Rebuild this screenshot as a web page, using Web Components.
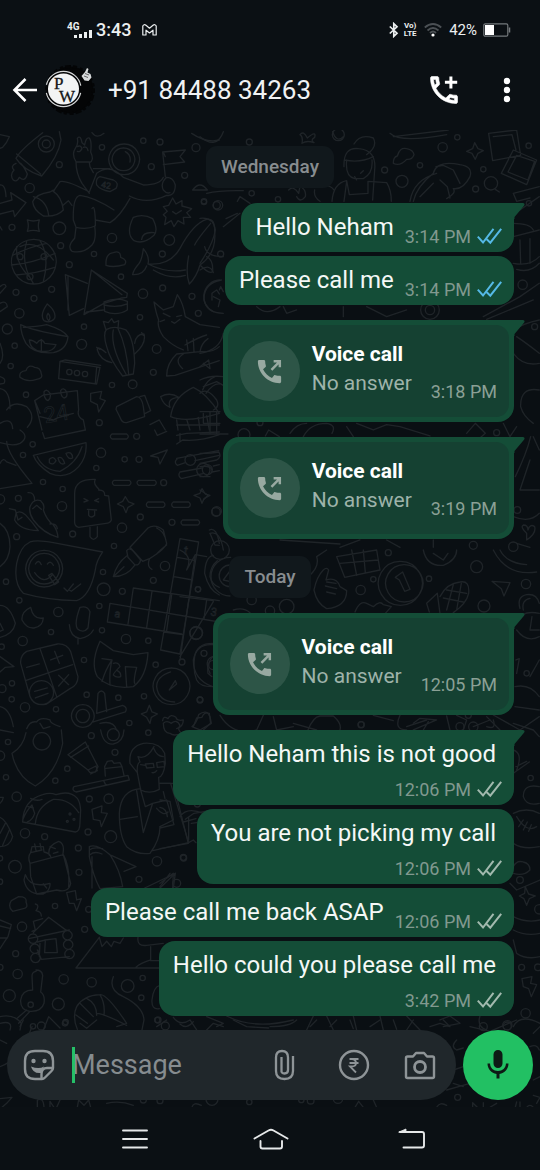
<!DOCTYPE html>
<html lang="en">
<head>
<meta charset="utf-8">
<meta name="viewport" content="width=device-width, initial-scale=1">
<title>Chat</title>
<style>
  html, body { margin: 0; min-height: 100%; background: #0b1014; }
  body { font-family: Roboto, "Liberation Sans", sans-serif; color: #fff; }
</style>
</head>
<body>
<chat-screen>
  <status-bar slot="top"></status-bar>
  <chat-header slot="top">+91 84488 34263</chat-header>
  <date-chip>Wednesday</date-chip>
  <message-bubble tail read time="3:14 PM">Hello Neham</message-bubble>
  <message-bubble read time="3:14 PM">Please call me</message-bubble>
  <call-bubble time="3:18 PM">No answer</call-bubble>
  <call-bubble time="3:19 PM">No answer</call-bubble>
  <date-chip>Today</date-chip>
  <call-bubble time="12:05 PM">No answer</call-bubble>
  <message-bubble tail stacked time="12:06 PM">Hello Neham this is not good</message-bubble>
  <message-bubble stacked time="12:06 PM">You are not picking my call</message-bubble>
  <message-bubble time="12:06 PM">Please call me back ASAP</message-bubble>
  <message-bubble stacked time="3:42 PM">Hello could you please call me</message-bubble>
  <chat-composer slot="composer"></chat-composer>
  <system-nav slot="bottom"></system-nav>
</chat-screen>

<script>
const define = (name, html, after) => customElements.define(name, class extends HTMLElement {
  constructor() {
    super();
    this.attachShadow({ mode: 'open' }).innerHTML = html;
  }
  connectedCallback() { if (after) after(this, this.shadowRoot); }
});

const TAIL = '<svg class="tail" width="12" height="16" viewBox="0 0 12 16" aria-hidden="true"><path d="M0 0H10Q12.500 .3 11 2.800L1.500 14V16H0Z" fill="#144d37"/></svg>';

/* ---------- page frame ---------- */
define('chat-screen', `
<style>
  :host { display: flex; flex-direction: column; min-height: 100vh; background: #0b1014; }
  main { position: relative; flex: 1; display: flex; flex-direction: column; padding: 16px 7px 7px; overflow: hidden; }
  chat-wallpaper { position: absolute; inset: 0; }
  .log { position: relative; display: flex; flex-direction: column; align-items: flex-end; padding: 0 19px 14px; }
  .composer { position: relative; margin-top: auto; }
</style>
<slot name="top"></slot>
<main>
  <chat-wallpaper></chat-wallpaper>
  <div class="log"><slot></slot></div>
  <div class="composer"><slot name="composer"></slot></div>
</main>
<slot name="bottom"></slot>`);

/* ---------- status bar ---------- */
define('status-bar', `
<style>
  :host { display: flex; align-items: center; justify-content: space-between; height: 60px; padding: 0 29px 0 67px; color: #eceff0; }
  div { display: flex; align-items: center; }
  svg { display: block; }
  .net { display: grid; width: 24px; margin-right: 5px; font: 700 10px/7px Roboto, sans-serif; }
  .net svg { margin-left: 7px; }
  time { font: 500 18px/22px Roboto, sans-serif; margin-right: 11px; }
  .volte { font: 700 8px/8px Roboto, sans-serif; text-align: center; width: 14px; margin: 0 7px 0 4px; }
  .pct { font-size: 15px; line-height: 20px; margin: 0 6px 0 7px; }
</style>
<div>
  <span class="net">4G<svg width="18" height="8" viewBox="0 0 18 8" fill="#eceff0"><path d="M0 5h3v3H0zM5 4h3v4H5zM10 2h3v6h-3zM15 0h3v8h-3z"/></svg></span>
  <time>3:43</time>
  <svg width="15" height="12" viewBox="0 0 15 12" fill="none" stroke="#eceff0" stroke-width="1.200" stroke-linejoin="round"><path d="M.8 2v9h3.200V6.200l3.500 2.800L11 6.200V11h3.200V2Q13-.2 11 1.300L7.500 4.200 4 1.300Q2-.2.8 2Z"/></svg>
</div>
<div>
  <svg width="10" height="16" viewBox="0 0 10 16" fill="none" stroke="#eceff0" stroke-width="1.700"><path d="M.8 4.500 8 11.200 4.800 14.300V1.700L8 4.800.8 11.500"/></svg>
  <span class="volte">Vo)<br>LTE</span>
  <svg width="18" height="14" viewBox="0 0 18 14" fill="none" stroke="#4b5054" stroke-width="1.800"><path d="M.8 4.500Q9-2.500 17.200 4.500M3.500 7.500Q9 2.500 14.500 7.500M6 10Q9 7 12 10"/><circle cx="9" cy="12" r="1.600" fill="#fff" stroke="none"/></svg>
  <span class="pct">42%</span>
  <svg width="28" height="14" viewBox="0 0 28 14"><rect x=".8" y=".8" width="24" height="12.400" rx="1.500" fill="none" stroke="#74797c" stroke-width="1.200"/><path d="M26.500 4.500v5" stroke="#74797c" stroke-width="1.500"/><rect x="2" y="2" width="9" height="10" fill="#fff"/></svg>
</div>`);

/* ---------- header ---------- */
define('chat-header', `
<style>
  :host { display: flex; align-items: center; height: 60px; padding: 0 18px 10px 11px; }
  button { padding: 0; border: 0; background: none; display: block; }
  svg { display: block; }
  .avatar { margin: 0 12px 0 5px; }
  h1 { flex: 1; margin: 0; font: 400 26px/32px Roboto, sans-serif; color: #f0f2f3; }
  .more { margin-left: 30px; }
</style>
<button aria-label="Back"><svg width="28" height="28" viewBox="0 0 28 28" fill="none" stroke="#fff" stroke-width="2.600"><path d="M26 14H4M14.500 3 3.500 14l11 11"/></svg></button>
<svg class="avatar" width="52" height="52" viewBox="0 0 52 52" aria-hidden="true">
  <circle cx="26" cy="26" r="23.500" fill="#040506" stroke="#040506" stroke-width="3" stroke-dasharray="3 2 6 2 4 3"/>
  <circle cx="19.500" cy="25" r="15.500" fill="#f3f4f4"/>
  <circle cx="19.500" cy="25" r="17.600" fill="none" stroke="#d5d7d8" stroke-width="1.200" stroke-dasharray="47 8.300" stroke-dashoffset="-4"/>
  <text x="10" y="25" font-family="Liberation Serif, serif" font-size="17" fill="#161819" stroke="#161819" stroke-width=".3">P<tspan x="15" y="38">W</tspan></text>
  <path d="m41 8 2-4 1.500 1-1 3.500 3 1.500 1 3.500-3 3.500-4-.5-3-4.500Z" fill="#d8dadb"/>
  <path d="M41 9.500 45 11M40 12l4 1.500" stroke="#444" stroke-width=".8"/>
</svg>
<h1><slot></slot></h1>
<button aria-label="Add call"><svg width="36" height="36" viewBox="0 0 24 24" fill="#fff"><path stroke="#fff" stroke-width=".4" d="M6.540 5c.06.890.210 1.760.450 2.590l-1.200 1.200c-.410-1.200-.670-2.470-.760-3.790h1.510m9.860 12.020c.850.240 1.720.390 2.600.450v1.490c-1.320-.090-2.590-.350-3.800-.750l1.200-1.190M7.500 3H4c-.550 0-1 .450-1 1 0 9.390 7.610 17 17 17 .550 0 1-.450 1-1v-3.490c0-.550-.450-1-1-1-1.240 0-2.450-.200-3.570-.570-.100-.040-.210-.050-.310-.050-.260 0-.510.100-.710.290l-2.200 2.200c-2.830-1.450-5.150-3.760-6.590-6.590l2.200-2.200c.280-.280.360-.670.250-1.020C8.700 6.450 8.500 5.250 8.500 4c0-.550-.450-1-1-1z"/><path d="M15.600 3h2v2.900h3.200v2h-3.200v3.100h-2V7.900h-3V5.900h3z"/></svg></button>
<button class="more" aria-label="More options"><svg width="30" height="36" viewBox="0 0 30 36" fill="#fff"><circle cx="15" cy="9" r="3.200"/><circle cx="15" cy="18" r="3.200"/><circle cx="15" cy="27" r="3.200"/></svg></button>`);

/* ---------- date separator ---------- */
define('date-chip', `
<style>
  :host { display: block; align-self: center; margin-bottom: 15px; padding: 0 15px; border-radius: 11px; background: #11181c; color: #888d90; font: 500 19px/42px Roboto, sans-serif; position: relative; }
  :host(:not(:first-of-type)) { margin-top: 2px; }
</style>
<slot></slot>`);

/* ---------- text message ---------- */
define('message-bubble', `
<style>
  :host { position: relative; display: flex; align-items: flex-end; gap: 11px; margin-bottom: 4px; padding: 10px 12px 5px 14px; border-radius: 16px; background: #144d37; }
  :host([tail]) { border-top-right-radius: 0; }
  :host([stacked]) { flex-direction: column; gap: 0; }
  :host(:last-of-type) { margin-bottom: 0; }
  p { margin: 0 0 6px; font-size: 24px; line-height: 28px; color: #f4f8f6; white-space: nowrap; }
  :host([stacked]) p { margin: 0 6px 12px 0; }
  .meta { display: flex; align-items: center; gap: 6px; font-size: 18px; line-height: 20px; color: #81998f; white-space: nowrap; }
  .tick { display: block; fill: none; stroke: #a2b9ae; stroke-width: 2; }
  :host([read]) .tick { stroke: #55b9e6; }
  .tail { position: absolute; top: 0; right: -11px; display: none; }
  :host([tail]) .tail { display: block; }
</style>
<p><slot></slot></p>
<span class="meta"><time></time><svg class="tick" width="25" height="18" viewBox="0 0 25 18" aria-hidden="true"><path d="M.8 8.700 6 14.500 16.500 .8M9.800 11.300 13.300 14.700 24.200 .8"/></svg></span>
${TAIL}`, (el, root) => { root.querySelector('time').textContent = el.getAttribute('time'); });

/* ---------- voice call entry ---------- */
define('call-bubble', `
<style>
  :host { position: relative; display: block; margin: 11px 0 15px; padding: 5px; border-radius: 16px 0 16px 16px; background: #144d37; }
  .panel { display: flex; align-items: center; padding: 15px 12px; border-radius: 13px; background: #154132; }
  .disc { width: 60px; height: 60px; border-radius: 50%; background: #2d5547; display: grid; place-items: center; margin-right: 12px; }
  .text { padding-bottom: 4px; font-size: 21px; line-height: 29px; color: #9eb3aa; white-space: nowrap; }
  strong { display: block; font-weight: 700; color: #fff; }
  time { align-self: flex-end; margin-left: 19px; font-size: 18px; line-height: 20px; color: #8ba096; white-space: nowrap; }
  .tail { position: absolute; top: 0; right: -11px; }
  svg { display: block; }
</style>
<div class="panel">
  <span class="disc"><svg width="31" height="31" viewBox="0 0 24 24" fill="#98a9a1" aria-hidden="true"><path d="M20.010 15.380c-1.230 0-2.420-.200-3.530-.560-.350-.120-.740-.030-1.010.240l-1.570 1.970c-2.830-1.350-5.480-3.900-6.890-6.830l1.950-1.660c.270-.280.350-.670.240-1.020-.370-1.110-.560-2.300-.560-3.530 0-.540-.450-.990-.990-.990H4.190C3.650 3 3 3.240 3 3.990 3 13.280 10.730 21 20.010 21c.710 0 .990-.630.990-1.180v-3.450c0-.540-.450-.990-.990-.990z"/><path d="M13.500 10.700 19.800 4.400M15.200 4H20v4.800" fill="none" stroke="#98a9a1" stroke-width="1.900"/></svg></span>
  <span class="text"><strong>Voice call</strong><slot></slot></span>
  <time></time>
</div>
${TAIL}`, (el, root) => {
  root.querySelector('time').textContent = el.getAttribute('time');
  const prev = el.previousElementSibling;
  if (prev && prev.localName !== 'message-bubble') el.style.marginTop = '0';
});

/* ---------- composer ---------- */
define('chat-composer', `
<style>
  :host { display: flex; gap: 7px; }
  form { flex: 1; min-width: 0; display: flex; align-items: center; gap: 34px; height: 70px; box-sizing: border-box; padding: 0 20px 0 16px; border-radius: 35px; background: #20272b; }
  button { flex: none; padding: 0; border: 0; background: none; display: block; }
  svg { display: block; }
  .field { position: relative; flex: 1; min-width: 0; margin-left: -17px; }
  .field::before { content: ""; position: absolute; left: 0; top: 0; bottom: 0; width: 3px; background: #25c068; }
  input { display: block; width: 100%; height: 36px; box-sizing: border-box; padding: 0; border: 0; outline: 0; background: none; color: #e9edef; font: 400 27px/36px Roboto, sans-serif; }
  input::placeholder { color: #868c8f; opacity: 1; }
  .mic { width: 70px; height: 70px; border-radius: 50%; background: #22c063; display: grid; place-items: center; }
</style>
<form>
  <button type="button" aria-label="Stickers"><svg width="32" height="32" viewBox="0 0 32 32" fill="none" stroke="#8e9497" stroke-width="2.400"><path d="M19 30H12Q2 30 2 20V12Q2 2 12 2H20Q30 2 30 12V19Q30 20.500 28.500 22L22 28.500Q20.500 30 19 30Z"/><path d="M18.500 30V25Q18.500 19 24 19H30" /><path d="M8 17.500Q16 20.500 21 17.500L18 24Q10 25 8 17.500Z" fill="#8e9497" stroke="none"/><circle cx="10.500" cy="12" r="2.200" fill="#8e9497" stroke="none"/><circle cx="21.500" cy="12" r="2.200" fill="#8e9497" stroke="none"/></svg></button>
  <label class="field"><input type="text" placeholder="Message" aria-label="Message"></label>
  <button type="button" aria-label="Attach"><svg width="32" height="32" viewBox="0 0 32 32" fill="none" stroke="#8e9497" stroke-width="2.300"><path d="M21 7V22Q21 30 12.500 30T4 22V8.500Q4 2 10 2T16 8.500V21Q16 24.500 12.500 24.500T9.500 21V8"/></svg></button>
  <button type="button" aria-label="Pay"><svg width="32" height="32" viewBox="0 0 32 32" fill="none" stroke="#8e9497" stroke-width="2.400"><circle cx="16" cy="16" r="14"/><path d="M11.500 10H20.500M11.500 14H20.500M11.500 10H14Q18 10.500 18 14T13.500 17.500H12L18 23.500" stroke-width="1.800"/></svg></button>
  <button type="button" aria-label="Camera"><svg width="32" height="32" viewBox="0 0 32 32" fill="none" stroke="#8e9497" stroke-width="2.400" stroke-linejoin="round"><path d="M3.500 7.500H9L12 4H20L23 7.500H28.500Q30 7.500 30 9V27.500Q30 29 28.500 29H3.500Q2 29 2 27.500V9Q2 7.500 3.500 7.500Z"/><circle cx="16" cy="18" r="5.500" stroke-width="2.800"/></svg></button>
</form>
<button class="mic" aria-label="Record voice message"><svg width="36" height="36" viewBox="0 0 24 24" fill="#0d1a15"><path d="M12 14c1.660 0 3-1.340 3-3V5c0-1.660-1.340-3-3-3S9 3.340 9 5v6c0 1.660 1.340 3 3 3zM17.300 11c0 2.900-2.400 5-5.300 5s-5.300-2.100-5.300-5H5c0 3.530 2.610 6.430 6 6.920V21h2v-3.080c3.390-.490 6-3.390 6-6.920z"/></svg></button>`);

/* ---------- system navigation ---------- */
define('system-nav', `
<style>
  :host { display: flex; align-items: center; justify-content: space-between; height: 63px; padding: 0 113px 0 120px; }
  button { padding: 0; border: 0; background: none; display: block; }
  svg { display: block; fill: none; stroke: #e6e8e9; stroke-width: 1.900; stroke-linecap: round; stroke-linejoin: round; }
</style>
<button aria-label="Recent apps"><svg width="31" height="24" viewBox="0 0 31 24"><path d="M3 3.500H27M3 12H27M3 20.500H27"/></svg></button>
<button aria-label="Home"><svg width="42" height="24" viewBox="0 0 42 24"><path d="M1.500 11.500 15.500 3.500Q18 2 20.500 3.500L34.500 11.500M7.500 14V19.500Q7.500 21.500 9.500 21.500H27Q29 21.500 29 19.500V14"/></svg></button>
<button aria-label="Back"><svg width="31" height="24" viewBox="0 0 31 24"><path d="M4 5H26Q28 5 28 7V18.500Q28 20.500 26 20.500H7.500"/><path d="M3 5 10 2V5Z" fill="#e6e8e9" stroke-width=".8"/></svg></button>`);

/* ---------- doodle wallpaper ---------- */
/* Each tile is drawn at three times its size: x, y, outlines, small circles, lettering. */
const TILES = [
  [0, 0, `
    M128 8Q60 60 48 85Q70 120 125 138Q175 80 183 30L178 5M50 72 122 132M48 100Q30 108 42 120Q28 135 40 150Q50 158 58 142Q75 158 82 132Q72 110 62 100
    M0 55 8 52Q20 40 28 20L0 14M0 220 36 210 32 188 78 218 44 260 40 242 0 252M0 165Q16 162 18 200
    M268 186Q200 150 180 155L160 184M268 190 246 160Q228 130 228 95Q214 72 226 55Q236 42 232 25Q242 14 246 38L254 45Q258 20 268 24Q276 34 272 66Q284 92 268 98L270 110L280 128M228 96H268M232 50Q242 44 246 56Q240 68 232 64M250 52Q262 48 264 62
    M280 116H330M268 186 290 130Q330 100 370 142L430 165Q480 165 490 142M388 198Q440 225 500 196Q525 200 526 165Q520 142 500 142Q480 160 490 180Q500 192 510 188M390 205Q360 260 330 278L286 270Q284 220 276 236M342 240Q280 200 240 196Q218 200 220 270L228 292Q260 300 286 288V268M228 292 224 325Q200 350 216 364Q250 372 276 345Q290 330 284 288
    M160 184Q185 200 190 240Q170 262 130 258Q100 240 98 215Q108 192 150 186Q170 175 160 184M100 200Q140 210 146 256M190 225 205 212 216 226
    M300 140 340 150Q358 158 348 175L330 185Q300 180 290 165Q286 145 300 140Z
    M372 42A46 46 0 1 0 373 42M370 54A34 34 0 1 0 371 54M376 65Q394 75 390 96
    M496 140 488 66 556 60 540 80 554 96 490 104M490 66 496 80
    M518 204 528 222 546 212 546 228 575 236 560 248 572 262 550 262 552 282 534 272 522 290 514 272 494 284 498 262 490 254 502 244 490 230 506 226ZM518 245 528 252 544 242
    M82 270Q100 276 118 270Q112 288 118 304Q100 298 82 304Q88 288 82 270Z
    M400 262Q430 250 458 266Q476 300 462 316Q430 345 402 332Q376 310 400 262ZM425 328Q428 305 462 308
    M101 328A67 67 0 1 0 102 328M60 350Q110 325 160 390M40 375Q90 350 140 340M34 405Q100 400 165 370M48 435Q110 430 164 412M80 335Q60 400 100 460M120 332Q150 380 130 455M50 350Q46 400 88 440
    M318 395Q320 370 340 368Q362 360 362 382Q384 390 374 404Q340 414 318 406Z
    M430 356Q450 380 444 402Q510 408 540 355Q580 280 620 268Q645 262 644 305Q650 370 600 405Q590 440 568 462Q556 430 566 378M430 356Q426 390 416 402Q400 420 398 434Q430 436 440 408M444 402Q500 430 556 420M460 420Q510 450 556 436M600 405Q630 435 638 424Q640 390 620 380M632 280Q590 330 584 345
    M196 434 208 556 250 536M196 434 262 460M274 420 382 490 380 502 366 504 312 520 252 554ZM274 420 366 494M204 440V540M252 554 260 546 310 540M312 516Q350 500 382 514V540Q350 560 314 544ZM312 525Q350 535 382 522
    M142 522Q170 545 164 565Q150 582 132 572Q118 555 142 522ZM144 550Q155 562 146 572Q136 562 144 550ZM62 584Q90 600 204 620Q200 660 160 668Q100 672 78 640Q62 610 62 584ZM70 592Q110 590 140 584Q190 600 202 618M88 630Q100 630 110 640Q124 620 134 640L168 644Q160 668 124 664Q90 660 88 630ZM124 628V662
    M320 598Q345 585 378 600Q402 625 404 700L400 732 368 738Q330 690 320 650Q308 610 320 598ZM340 600Q330 650 378 732M355 598Q380 650 386 732M318 600 310 574 325 578 335 566 342 578 356 572 354 596M404 640Q408 612 432 612Q440 640 404 672M318 668Q290 645 292 660Q300 690 335 698M290 652 300 658M425 608 430 616
    M462 516 490 540 520 530 532 494Q550 520 556 560M462 516Q468 550 476 570Q470 590 490 620Q520 650 550 660M556 560 600 584 658 592M490 550 510 560M530 560 545 556M515 575 524 580 540 568M480 575 494 570M500 738 525 736 658 692M500 738Q500 700 530 672L600 665Q640 668 658 650M550 672Q520 690 548 716M560 630 564 662M580 625 582 664M624 626Q604 640 600 665M555 645Q600 620 620 615
    M180 694 300 712 290 762 176 746ZM180 694 196 690 302 706M290 712 286 760
    M60 742Q56 724 78 722Q84 702 104 712Q122 712 124 732Q130 745 110 748Q80 758 60 742Z
    M104 812 130 795 232 782 236 840Q230 860 250 870L256 900M104 812 126 900M104 812Q112 830 120 850M132 786Q140 774 150 790Q154 806 144 812Q132 808 132 786ZM182 782Q190 770 200 786Q204 802 192 804Q182 798 182 782ZM120 860 160 870Q170 862 220 850
    M272 790 305 784 300 806 316 812 296 846 292 824 272 814Z
    M350 830 410 800Q425 800 430 830L434 860 380 878Q366 880 360 862L348 838ZM420 800 434 796 452 842 436 850
    M482 800Q510 785 536 802Q500 805 510 832Q490 825 482 800ZM512 860Q520 800 580 772Q620 790 658 850M512 860Q560 880 658 850M530 870 534 900M560 868 570 900M595 862 600 900M620 858 628 900M608 780Q620 750 645 740M618 790Q640 760 658 762M450 884 478 870 496 900M530 885H658
    M578 180Q600 150 622 180ZM575 10Q620 40 658 30M658 450A50 50 0 0 0 640 545M636 490 650 480 658 492M636 490V510
    M0 290 6 300M0 640Q16 680 0 700M0 740Q20 745 12 760L0 762M0 776Q30 780 30 836M20 840Q40 810 80 830Q110 860 82 892M0 880Q36 860 38 896M0 470Q16 456 18 470L0 490M0 520Q20 510 22 530L0 545M276 8Q290 28 312 10`,
    [[139,42,24],[139,42,12],[306,52,8],[178,104,9],[89,174,14],[430,32,8],[480,36,9],[454,110,9],[588,53,12],[554,136,9],[612,216,8],[650,226,11],[36,292,9],[178,295,19],[336,324,14],[182,347,9],[508,330,16],[282,372,8],[208,404,9],[487,372,9],[363,440,8],[155,478,9],[48,487,9],[102,505,9],[58,550,14],[429,491,14],[488,474,9],[576,499,9],[595,550,9],[252,590,8],[420,562,8],[22,597,15],[44,647,8],[245,643,15],[470,657,13],[32,708,8],[460,727,9],[398,763,13],[336,765,8],[78,794,8],[298,878,9],[208,726,8],[231,729,8],[255,732,8],[60,380,9],[132,380,9],[90,440,9]],
    [[302,172,26,'42',10],[136,880,66,'24',-10]]],
  [0, 300, `
    M0 38Q40 50 60 40Q90 20 60 0M128 8 134 26 256 0M20 34Q20 70 96 160L0 176M0 100Q10 80 20 96L48 106M100 76 258 38Q262 80 236 110Q200 150 150 130Q110 105 100 76ZM112 80Q130 120 180 124Q230 100 246 50M148 88Q160 76 168 92Q160 108 148 98ZM174 84Q186 76 194 100Q180 108 174 84ZM198 70Q216 62 218 84Q204 90 198 70Z
    M336 12H380Q390 20 380 27H336Q326 20 336 12ZM342 151H388Q398 158 388 166H342Q332 158 342 151ZM416 151H464Q474 158 464 166H416Q406 158 416 151ZM444 216H490Q500 224 490 232H444Q434 224 444 216ZM520 216H566Q576 224 566 232H520Q510 224 520 216ZM548 270H594Q604 277 594 285H548Q538 277 548 270Z
    M464 0 472 16 500 4M452 78 502 60 480 102 474 82ZM530 16 560 10 658 6M530 42 548 30Q600 35 658 14M540 10V34
    M530 85 656 62M532 106 556 98M585 92 658 76M540 126 606 114M544 146 612 130M636 126 658 122M640 108 658 104M532 86Q520 96 532 106M540 126Q532 138 544 146
    M224 190Q224 146 286 148Q280 160 290 170Q300 180 296 180Q315 180 314 196L326 198 334 270Q330 280 318 280L236 292Q222 290 224 270ZM270 292V320Q280 336 292 320V290M252 206 264 212 252 216M296 206 284 212 296 216M262 238 290 240M266 240V256Q274 266 284 256V240
    M376 200 386 216 402 222 384 232 378 248 370 230 352 222 368 214ZM606 176 616 192 630 196 612 206 606 220 600 204 582 196 600 190Z
    M90 230Q100 205 122 212Q136 225 130 240Q140 270 160 285Q172 300 174 322Q130 310 100 270Q86 250 90 230ZM104 212Q104 186 84 188M98 236 110 226 124 238M48 250Q60 240 76 254Q100 280 115 302Q60 300 44 270ZM28 236 46 240 54 270 66 262M150 282Q170 280 172 296
    M90 336Q110 328 160 338L308 366Q288 395 286 420Q270 500 230 512Q140 510 70 490Q40 460 50 400Q60 350 90 336ZM132 361A55 55 0 1 0 133 361M132 370A46 46 0 1 0 133 370M106 402Q116 386 124 404M142 402Q152 390 160 406M104 428Q130 465 156 436M146 436 156 430 176 456 164 464ZM192 474 202 484 220 462M208 480 214 484 242 462
    M390 352 444 294Q465 280 490 300L500 340Q496 356 450 385L428 394ZM380 362Q390 350 402 366L422 390Q418 408 404 404L384 382ZM380 378Q350 400 340 440Q380 440 404 406M342 438 372 410M448 388Q440 410 456 418M500 345Q480 360 470 372M470 294Q490 305 494 320
    M540 326 596 336 540 672 482 660ZM532 382 586 392M522 440 578 450M400 474 658 512M400 474 384 582M330 520 658 576M330 520 322 576 545 612M456 484 440 592M515 494 500 602M568 502 558 562M620 510 612 566M492 606 548 614
    M92 532Q64 545 66 570Q80 596 102 594Q128 590 130 564Q100 570 92 532ZM240 532Q262 526 270 545L264 594Q250 612 232 596Q222 580 240 532ZM208 584Q210 620 240 626Q270 620 280 600M234 626V642
    M80 664 172 642Q200 640 212 665L234 740Q234 765 210 776L140 822Q100 830 90 800L62 700Q60 676 80 664ZM120 656 170 800M76 752 218 704M80 712 118 702M152 690 188 676M164 664 178 700M176 736 206 764M206 734 176 768M104 784 142 774M106 804 144 790M124 752A36 36 0 1 0 125 752
    M300 634 340 662 400 674 444 668Q440 740 400 770Q330 780 292 740Q270 700 300 634ZM306 686 336 690Q316 720 306 755M336 690Q328 720 330 765M376 710 410 712Q400 750 404 760M376 710 380 770M340 700Q356 695 360 710Q340 730 340 735Q350 745 362 740Q364 728 352 722
    M514 714A55 55 0 1 0 515 714M512 726Q470 740 470 770Q475 815 524 816M508 780 526 752 530 762Z
    M638 640Q590 640 584 680Q578 720 590 750Q600 770 636 770M638 680Q620 700 624 730L636 740
    M294 790Q304 776 314 790L320 845M294 790 290 850M248 824A34 34 0 1 0 249 824M248 838A20 20 0 1 0 249 838M290 850 368 826Q384 832 376 846L280 876M300 880Q340 870 350 900
    M448 826 456 846 472 852 454 862 450 880 440 862 424 852 440 846ZM488 872Q490 856 504 866Q512 850 528 862Q530 874 550 870Q550 890 530 896M580 890 590 864 606 862Q612 844 628 850L632 880 610 900
    M80 896Q90 872 110 876Q120 860 150 870Q150 880 180 890M120 880 130 896 150 890M0 280Q30 300 30 350Q28 390 0 410M0 526Q30 526 46 580Q40 612 0 622M0 580 10 600 0 604M0 680 42 710 16 712 0 726M0 830Q30 836 40 890
    M628 300Q650 290 658 340M640 376Q616 380 614 430Q626 480 658 495M652 392Q630 410 630 440Q636 465 658 472M630 310 645 345 658 346`,
    [[98,43,8],[69,75,8],[303,68,14],[289,114,8],[410,19,9],[374,88,8],[417,88,9],[129,156,8],[188,177,8],[186,229,14],[55,205,9],[50,320,9],[218,312,9],[366,293,14],[421,261,9],[516,277,9],[342,348,8],[495,408,14],[491,158,9],[571,90,16],[622,119,15],[648,246,13],[309,426,8],[311,478,19],[367,484,9],[460,451,9],[594,478,8],[18,455,8],[58,511,8],[298,528,8],[175,546,14],[153,606,8],[68,633,14],[306,601,8],[378,627,14],[445,632,8],[589,608,19],[252,690,8],[467,704,8],[546,696,9],[36,760,8],[35,808,8],[75,832,14],[260,794,8],[355,803,8],[432,799,8],[168,838,8],[600,809,8],[388,879,8],[6,776,12],[612,670,9],[0,208,14],[5,650,8]],
    [[342,560,32,'a',10],[550,372,36,'t',10],[630,556,34,'3',10]]],
  [0, 600, `
    M78 8Q70 50 36 70Q50 140 106 168Q170 130 188 40L184 0M125 8A26 26 0 1 0 126 8M0 0 40 8M302 0Q310 45 340 42Q370 36 372 0
    M204 74 256 36 262 48 294 110 286 126 270 128 264 120ZM212 82 266 48M264 120 288 108 292 122 272 132
    M222 170 384 136 388 150 228 186Q214 180 222 170ZM312 154 318 166M316 138 314 110 322 94 336 92 342 100 360 98 366 110 372 136M318 115 366 110
    M390 100Q385 50 430 40Q480 36 494 70L496 100Q490 140 476 142M390 100 412 128 422 180Q450 194 478 178L476 142M412 128Q410 100 420 96L414 80Q440 90 462 50M462 56Q470 78 490 80M436 102 460 100 462 112 440 114ZM470 98 492 94 494 110 472 112ZM422 104 436 106M456 128Q465 130 470 122
    M422 176Q362 180 358 250Q358 320 380 350Q410 375 450 370Q480 330 480 290M410 182 430 308 458 220M422 180 436 230 458 220 500 210 522 284 480 294M478 160H512L566 338 458 362M360 268 412 260M470 235Q490 260 504 246M490 185 495 205
    M556 268 582 250 640 240M566 338 580 330 588 338M566 262V330M574 280 590 278
    M68 276Q70 210 128 194Q150 186 168 194Q210 180 232 205Q240 215 242 240L240 278Q240 304 226 306ZM106 282Q110 230 160 208Q210 206 236 248M68 270Q80 240 96 225Q100 240 104 250Q98 270 82 276M92 205Q110 215 126 208M84 230 100 234
    M276 238 306 228 304 248 322 250 304 290 300 272 280 268Z
    M90 400 190 374 212 460Q206 490 170 480L110 492 92 440ZM90 400Q82 380 92 368L96 350H130L132 366Q150 370 152 380M92 368 126 360M104 342 108 362M120 340 124 360M148 376Q140 348 176 334Q196 340 188 376M150 350 166 356M160 370 174 366M190 374Q210 410 206 470M76 434Q90 476 150 460Q152 480 130 492Q80 496 72 450ZM130 462 140 474
    M0 202 10 202Q8 214 0 220M0 262Q20 270 38 320Q30 350 0 350M0 310 16 280M8 346 28 300
    M268 350Q290 340 330 374Q360 420 368 470L300 476Q280 440 268 380ZM268 360Q280 350 308 356M270 374Q284 362 306 372M334 376 408 410 372 424M276 380V474
    M434 474 526 430 520 474M526 430 480 474M200 488 226 482 230 510 244 506 230 542 222 520 208 520Z
    M34 512 56 500Q82 500 78 516Q86 534 70 536L38 544Q22 530 34 512Z
    M96 604 106 600 100 574 128 566M100 608 146 562 200 602M124 558Q124 545 108 542Q120 525 106 522M86 626 208 600M112 636 136 630 134 668 172 668 168 626 134 630M120 640 118 680M112 660 124 688 208 680M98 612A14 14 0 1 0 100 612M104 642A14 14 0 1 0 105 642M106 670A14 14 0 1 0 107 670M202 602A14 14 0 1 0 203 602M204 630A14 14 0 1 0 205 630M208 658A14 14 0 1 0 209 658
    M0 570 34 584 24 620Q10 640 0 656M0 588 32 596M0 624 22 624M228 714H480M228 714 298 622M298 622 306 650 320 634 334 650 342 634 360 640 370 624M414 622Q410 650 440 646L490 640M452 650V690Q420 700 408 712M480 692H452
    M108 720Q126 720 128 736L122 786Q136 795 132 820Q124 846 90 844Q60 840 62 810Q66 780 98 780L96 738Q96 726 108 724M80 840 50 866M88 846 56 880M0 860Q40 850 64 880L60 900
    M232 898Q216 860 230 830Q250 796 300 794Q320 790 380 880L350 890M240 820 280 860M260 805Q290 820 290 856M300 795Q316 820 312 856M228 855 262 880M290 850Q310 850 380 886M340 740Q324 780 370 800Q430 830 432 870L426 900M130 900 146 860 180 894M480 766Q460 770 456 810 454 840 478 836`,
    [[274,17,9],[345,67,9],[202,116,8],[166,152,8],[24,36,8],[18,142,8],[0,77,14],[50,200,14],[268,207,9],[326,206,14],[75,310,14],[134,320,9],[264,306,9],[332,320,18],[235,354,9],[45,410,19],[237,427,9],[471,394,14],[551,384,9],[417,448,9],[165,528,8],[0,385,8],[0,455,8],[266,538,9],[66,590,14],[254,598,9],[47,671,9],[0,712,9],[53,732,14],[191,748,14],[275,757,14],[383,768,19],[428,744,8],[28,797,18],[175,822,18],[424,803,8],[197,876,8],[92,824,8],[99,889,8],[340,14,18],[445,8,8],[472,870,8],[210,252,3],[222,268,3],[202,274,3]],[]],
  [200, 0, `
    M300 14Q310 0 322 24Q350 0 344 22Q330 30 342 38Q320 30 306 40Q310 20 300 14M398 5Q410 40 430 20M570 10Q600 40 740 14M580 20 745 0M432 110Q430 50 476 56Q530 60 524 120L518 210M462 42Q480 10 520 24Q534 50 500 74M434 90Q480 100 520 80M440 90Q435 140 464 146H490Q520 130 516 90M440 152 448 194 504 190V154L560 158Q574 180 574 214M440 152Q400 160 396 214M350 170Q390 160 402 180M344 180Q340 200 360 214M440 155 432 214M464 140 470 150M482 130 490 122
    M580 100Q580 80 592 78Q600 50 620 56Q640 60 642 74Q636 90 620 88Q600 110 580 100ZM640 214Q650 170 700 130Q710 90 780 104Q820 110 810 140Q790 180 760 176M708 110 730 106 760 120 780 160M720 150 742 170 750 204M740 206Q770 190 760 176M660 200 700 160M630 214Q640 150 710 130
    M824 38 834 56 850 62 834 70 826 88 816 70 800 64 818 56ZM866 10 950 0 962 76 878 92ZM880 20 936 14 948 60M940 60 1010 90 980 164 904 130ZM950 76 1004 94 984 150 924 126ZM940 190 1018 170M940 190 950 214 990 204M960 240 1018 200M886 178 898 186
    M266 180Q280 165 296 190L300 168Q320 180 316 200Q300 220 290 200M112 214 120 200 150 220M78 266 112 250M20 190Q60 180 130 182M0 20Q50 60 70 5M70 380Q20 380 14 350M0 265Q40 260 46 300Q40 340 0 400M70 290 120 250M0 420Q30 400 40 428M64 450Q10 460 12 510Q20 550 70 550M58 480 62 470 70 485M40 500 60 510 55 530M170 530Q200 560 240 530M250 530 260 550 290 540M430 530V560M850 560 960 500 1018 460M860 568 1000 510M940 280Q990 280 1000 300M940 320 1018 300M940 400Q990 410 1018 380M960 330 962 400M990 326 990 400M950 418Q990 430 1018 400M500 530 560 560 620 540`,
    [[415,14,18],[148,36,9],[660,106,8],[554,120,9],[606,154,18],[728,52,14],[772,22,8],[850,118,8],[827,177,9],[873,160,20],[986,47,8],[987,220,8],[155,190,8],[54,226,14],[12,214,8],[234,208,8],[62,372,9],[968,464,14],[690,540,14],[690,540,28]],[]],
  [200, 180, `
    M0 130Q60 120 70 70M0 170 26 150 30 176 10 160M0 210Q30 195 70 200M10 230 50 215 70 226M0 250Q20 230 50 270Q60 290 40 300M0 305H60M10 310V340H60M30 305V370M50 305V370M0 372H84M0 430Q40 430 56 426Q66 440 50 450L0 460M0 470Q30 465 36 480M0 500 30 500M0 540 24 556 10 570M30 670Q60 660 70 720
    M196 378 206 360 238 380M270 370Q290 340 320 340M310 380Q330 340 380 340Q410 345 396 370M440 350 460 380M470 340 520 360 560 344 600 350 690 378M800 370 826 340 856 370 840 384M910 340 930 380 950 350M940 60Q970 40 1018 30M940 130Q970 170 1018 160M950 80Q980 100 1018 130M1018 240Q960 230 962 290Q970 320 1000 340M946 500Q980 430 992 380M1000 380 1018 420M990 450 960 540 1018 540M940 620Q990 640 1018 610M950 700 990 712M980 670Q960 650 970 645Q984 645 984 660Q990 640 1004 650Q1010 670 980 690ZM700 690V712M560 690 600 712M480 690 420 712M240 690 420 702`,
    [[132,374,18],[180,338,9],[1004,50,9],[890,368,9],[952,600,10],[60,720,28],[50,604,14],[10,480,20],[940,710,14],[820,706,12]],[]],
  [180, 420, `
    M0 0Q40 20 20 60L46 14 80 20M0 140 100 152M46 14 0 330M100 155 0 320M152 22A52 52 0 0 0 150 138M150 45A32 32 0 0 0 150 110M130 90 152 60V95ZM160 180Q190 170 210 188M385 80Q420 50 410 20L440 0M402 120Q410 80 430 60Q440 50 446 60L438 90Q470 80 480 110L500 122Q500 170 440 176Q410 160 402 120ZM440 96 468 100M436 108 470 116M440 126 466 132
    M470 20 590 0 600 60 494 82ZM480 40 594 30M515 0 530 76M550 0 556 68M730 0Q740 50 790 46Q830 30 830 0M760 10 790 30 804 10M940 0Q980 80 1070 66M960 0Q980 40 1040 44M660 34A66 66 0 1 0 662 34M672 44A56 56 0 1 0 674 44M646 82 668 66 690 118 674 124 658 90Z
    M748 186 740 160 772 130 780 190M780 140Q800 100 840 96Q870 90 866 130Q860 160 820 188M800 120 860 130M790 144 850 156M820 104 800 180M844 100 830 180M525 186Q540 150 560 160L580 170Q600 150 610 164L634 170 616 190M936 94 990 98 972 138 964 116ZM1020 175Q1010 140 1040 134Q1070 130 1078 160M1030 180Q1024 150 1050 145M1010 210Q1030 180 1078 190M1010 240Q1040 280 1078 260M1056 200 1050 240H1078
    M98 284Q50 280 40 330Q40 390 98 410M98 320Q70 330 90 370M1008 330 1018 326 1010 370M1050 380 1078 330M1005 410Q1050 400 1078 440M940 495 1020 540 1078 500M1005 470 1078 480M36 530Q50 520 56 494Q80 476 90 500L94 520 60 540ZM120 496Q160 560 230 540L250 496M280 500 290 540 340 530M384 540Q400 500 420 498H460Q486 520 480 540M580 496 640 512M660 496Q640 540 680 540M700 520 720 505 770 510 700 540M730 540 745 515M800 498 810 540M830 496 860 510 850 540M920 500 960 540`,
    [[54,118,8],[215,150,14],[48,250,19],[320,170,22],[270,182,14],[580,88,8],[542,120,14],[625,8,9],[747,86,8],[890,50,18],[912,168,18],[1038,102,14],[1040,370,8],[60,450,9],[544,524,9],[865,496,9],[880,530,14],[100,345,14]],[]],
  [160, 590, `
    M10 10Q20 0 34 10Q50 -4 60 16Q50 30 66 40Q40 50 30 40Q10 40 10 10M0 190H40L85 370 0 386M0 240 30 244 40 300 0 320M0 262Q20 265 22 290M60 290Q80 260 130 280M70 306 108 296M980 20Q1010 30 1000 0M1060 10 1120 30 1138 50M1060 90Q1090 100 1070 150M1068 140 1100 124M1060 160 1108 126M1138 200Q1090 190 1090 230Q1100 260 1138 250M1060 280Q1100 260 1138 280M1060 370Q1090 390 1138 380M1070 290Q1100 340 1130 320M1076 320 1090 300M1090 330 1102 306M1106 334 1114 314M1060 440Q1070 420 1090 426Q1110 430 1110 450Q1090 470 1060 460M0 490 40 460 38 505M0 500 30 460M940 20 990 0M740 20 800 0M400 10 470 30`,
    [[112,252,9],[603,14,9],[70,412,9],[1112,174,8],[1080,480,10],[50,490,12],[900,20,12]],[]],
  [80, 750, `
    M1290 10 1310 30 1380 0M1336 20 1346 42 1366 48 1348 56 1340 76 1332 56 1318 48 1334 40ZM1300 110Q1340 130 1380 120M1300 150Q1340 170 1380 160M1300 180 1310 220Q1340 240 1380 230M1326 296 1356 290 1352 310 1370 314 1354 350 1346 326 1330 320ZM1300 440Q1320 400 1380 430M440 408Q520 450 640 420M280 412Q300 440 330 420L350 450M380 410 430 430 410 440M700 408 680 450M740 408 760 450M820 408 830 450M900 408 910 450M980 408 1020 450M1080 420 1110 408 1140 430 1090 440M1200 408Q1190 440 1220 450`,
    [[1378,88,14],[1325,262,9],[1374,262,10],[1337,400,14],[1282,438,12],[234,420,9],[256,438,12]],[]],
  [0, 890, `
    M0 10Q40 0 30 30M0 60 20 70M0 140Q30 130 40 110M0 236 36 232 20 250 6 262M60 20 70 0M80 60 96 20M112 262V240Q130 230 132 262M150 262V244L162 262M170 262 180 240M232 262 236 240 252 256 266 240 272 262M320 250Q360 240 400 256M576 262Q580 244 604 256M470 20 500 0M540 12Q560 30 580 5M240 10 260 25 290 0M620 30 640 10 670 20M700 0 740 20 806 24`,
    [[195,10,8],[124,18,12],[430,240,9],[480,242,9],[636,238,18],[748,246,8]],[]],
  [270, 890, `
    M0 20Q60 20 80 0M120 20 140 0M180 20 200 0M250 26 240 0M300 20 330 0M380 28 370 0M410 30 430 0M560 60Q540 80 560 90L580 84M550 150 580 140M550 190 580 200M530 210 600 190M480 20 510 10 540 20 520 0M790 40 810 20M780 80Q800 70 808 90M790 180 810 170M500 262Q510 244 530 256M608 262V248L622 262M640 262V248M660 262 680 250M736 262 740 246M750 262V246M770 262Q780 250 790 262M790 226 810 232 800 250M255 262 266 244 280 262M310 240 320 262M600 20 660 34 740 0`,
    [[563,232,9],[712,16,14],[94,240,8],[122,242,10],[204,236,14],[640,20,12]],[]]
];

define('chat-wallpaper', `
<style>
  :host { display: block; background: #0a0f13; overflow: hidden; }
  svg { display: block; width: 100%; height: 100%; }
  g { fill: none; stroke: #1f2428; stroke-width: 4; stroke-linejoin: round; stroke-linecap: round; }
  text { font-family: Roboto, sans-serif; stroke-width: 2; }
</style>
<svg viewBox="0 0 540 977" preserveAspectRatio="xMidYMin slice" aria-hidden="true">${TILES.map(([x, y, d, dots, words]) => `
  <g transform="translate(${x} ${y}) scale(.3333)"><path d="${d.trim()}"/>${
    dots.map(([cx, cy, r]) => `<circle cx="${cx}" cy="${cy}" r="${r}"/>`).join('')}${
    words.map(([tx, ty, s, t, a]) => `<text x="${tx}" y="${ty}" font-size="${s}" transform="rotate(${a} ${tx} ${ty})">${t}</text>`).join('')}</g>`).join('')}
</svg>`);
</script>
</body>
</html>
